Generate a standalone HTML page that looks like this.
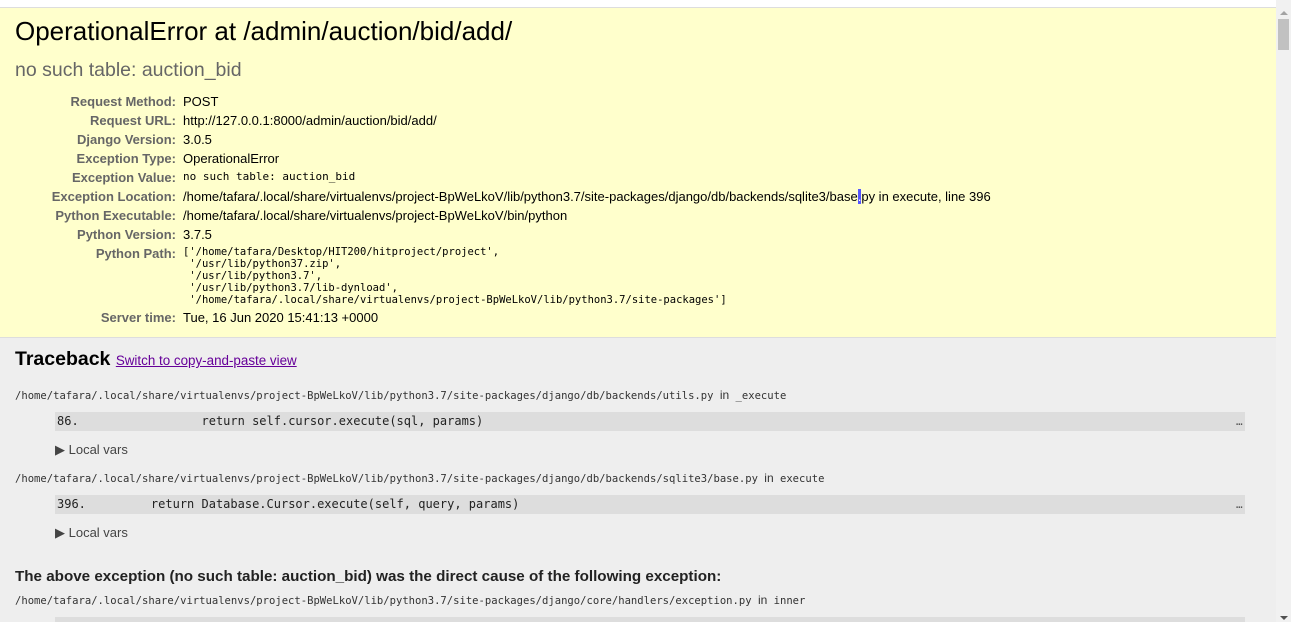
<!DOCTYPE html>
<html style="overflow:hidden"><head><meta charset="utf-8"><style>
*{margin:0;padding:0;box-sizing:border-box}
html,body{overflow:hidden}
body{width:1291px;height:622px;background:#fff;font-family:"Liberation Sans",sans-serif;font-size:13px;color:#000;position:relative}
.a{position:absolute;white-space:pre}
.m{font-family:"DejaVu Sans Mono",monospace}
#top{position:absolute;left:0;top:7px;width:1276px;height:331px;background:#ffc;border-top:1px solid #ddd;border-bottom:1px solid #ddd}
#tb{position:absolute;left:0;top:338px;width:1276px;height:284px;background:#eee}
.lb{position:absolute;left:0;width:176px;text-align:right;color:#666;font-weight:bold}
.v{position:absolute;left:183px}
.box{position:absolute;left:55px;width:1190px;height:19px;background:#ddd}
.lv{position:absolute;left:55px;color:#444}
.fp{position:absolute;left:15px;font-size:10.55px;color:#333}
#sb{position:absolute;left:1276px;top:0;width:15px;height:622px;background:#f1f1f1}
</style></head><body>
<div id="top"></div>
<div id="tb"></div>
<div class="a" style="left:15px;top:16px;font-size:26px">OperationalError at /admin/auction/bid/add/</div>
<div class="a" style="left:15px;top:59px;font-size:19.5px;color:#666">no such table: auction_bid</div>

<div class="lb a" style="top:94px">Request Method:</div><div class="v a" style="top:94px">POST</div>
<div class="lb a" style="top:113px">Request URL:</div><div class="v a" style="top:113px">http://127.0.0.1:8000/admin/auction/bid/add/</div>
<div class="lb a" style="top:132px">Django Version:</div><div class="v a" style="top:132px">3.0.5</div>
<div class="lb a" style="top:151px">Exception Type:</div><div class="v a" style="top:151px">OperationalError</div>
<div class="lb a" style="top:170px">Exception Value:</div><div class="v a m" style="top:170px;font-size:11px">no such table: auction_bid</div>
<div class="lb a" style="top:189px">Exception Location:</div><div class="v a" style="top:189px">/home/tafara/.local/share/virtualenvs/project-BpWeLkoV/lib/python3.7/site-packages/django/db/backends/sqlite3/base<span style="background:#55f;color:#fff">.</span>py in execute, line 396</div>
<div class="lb a" style="top:208px">Python Executable:</div><div class="v a" style="top:208px">/home/tafara/.local/share/virtualenvs/project-BpWeLkoV/bin/python</div>
<div class="lb a" style="top:227px">Python Version:</div><div class="v a" style="top:227px">3.7.5</div>
<div class="lb a" style="top:246px">Python Path:</div>
<div class="v a m" style="top:246px;font-size:10.5px;line-height:12px">['/home/tafara/Desktop/HIT200/hitproject/project',
 '/usr/lib/python37.zip',
 '/usr/lib/python3.7',
 '/usr/lib/python3.7/lib-dynload',
 '/home/tafara/.local/share/virtualenvs/project-BpWeLkoV/lib/python3.7/site-packages']</div>
<div class="lb a" style="top:310px">Server time:</div><div class="v a" style="top:310px">Tue, 16 Jun 2020 15:41:13 +0000</div>

<div class="a" style="left:15px;top:348px;font-size:19.5px;font-weight:bold">Traceback <span style="font-size:13.4px;font-weight:normal;color:#609;text-decoration:underline">Switch to copy-and-paste view</span></div>

<div class="fp a m" style="top:388px">/home/tafara/.local/share/virtualenvs/project-BpWeLkoV/lib/python3.7/site-packages/django/db/backends/utils.py <span style="font-family:'Liberation Sans';font-size:12px">in</span> _execute</div>
<div class="box" style="top:412px"></div>
<div class="a m" style="left:57px;top:414px;font-size:12px;color:#222">86.                 return self.cursor.execute(sql, params)</div>
<div class="a m" style="left:1236px;top:415px;font-size:11px;color:#555">…</div>
<div class="lv a" style="top:442px">▶ Local vars</div>

<div class="fp a m" style="top:471px">/home/tafara/.local/share/virtualenvs/project-BpWeLkoV/lib/python3.7/site-packages/django/db/backends/sqlite3/base.py <span style="font-family:'Liberation Sans';font-size:12px">in</span> execute</div>
<div class="box" style="top:495px"></div>
<div class="a m" style="left:57px;top:497px;font-size:12px;color:#222">396.         return Database.Cursor.execute(self, query, params)</div>
<div class="a m" style="left:1236px;top:498px;font-size:11px;color:#555">…</div>
<div class="lv a" style="top:525px">▶ Local vars</div>

<div class="a" style="left:15px;top:568px;font-size:15.2px;font-weight:bold;color:#222">The above exception (no such table: auction_bid) was the direct cause of the following exception:</div>
<div class="fp a m" style="top:593px">/home/tafara/.local/share/virtualenvs/project-BpWeLkoV/lib/python3.7/site-packages/django/core/handlers/exception.py <span style="font-family:'Liberation Sans';font-size:12px">in</span> inner</div>
<div class="box" style="top:617px;height:5px"></div>

<div id="sb">
<div style="position:absolute;left:4px;top:11px;width:0;height:0;border-left:4px solid transparent;border-right:4px solid transparent;border-bottom:4px solid #a3a3a3"></div>
<div style="position:absolute;left:2px;top:19px;width:11px;height:31px;background:#c1c1c1"></div>
<div style="position:absolute;left:4px;top:616px;width:0;height:0;border-left:4px solid transparent;border-right:4px solid transparent;border-top:4px solid #505050"></div>
</div>
</body></html>
